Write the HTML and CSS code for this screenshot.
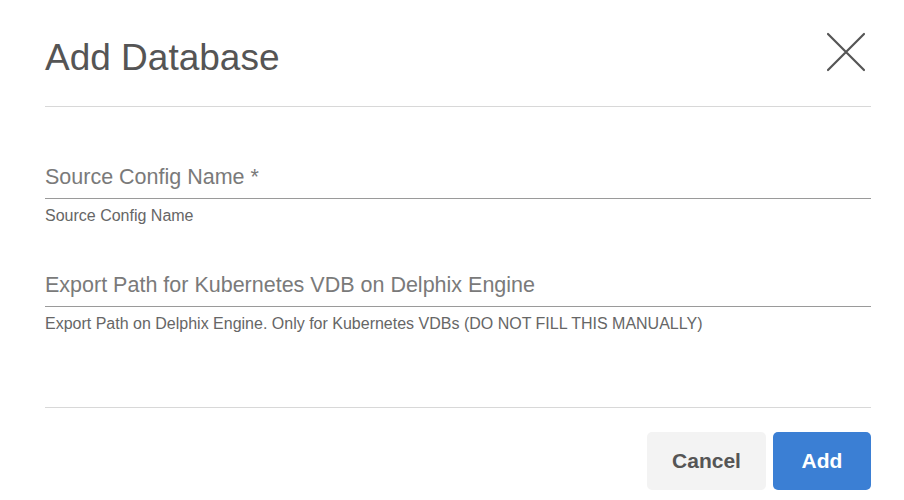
FILE: index.html
```html
<!DOCTYPE html>
<html lang="en">
<head>
<meta charset="utf-8">
<title>Add Database</title>
<link rel="stylesheet" href="styles.css">
</head>
<body>
<div class="dialog">
  <header class="dialog-header">
    <h1 class="dialog-title">Add Database</h1>
    <button class="close-btn" aria-label="Close">
      <svg width="40" height="40" viewBox="0 0 40 40">
        <path d="M2 2 L38 38 M38 2 L2 38" stroke="#555" stroke-width="2.2" stroke-linecap="round" fill="none"/>
      </svg>
    </button>
  </header>
  <section class="dialog-body">
    <div class="field">
      <div class="field-label">Source Config Name *</div>
      <div class="field-helper">Source Config Name</div>
    </div>
    <div class="field field-second">
      <div class="field-label">Export Path for Kubernetes VDB on Delphix Engine</div>
      <div class="field-helper">Export Path on Delphix Engine. Only for Kubernetes VDBs (DO NOT FILL THIS MANUALLY)</div>
    </div>
  </section>
  <footer class="dialog-footer">
    <button class="btn btn-cancel">Cancel</button>
    <button class="btn btn-primary">Add</button>
  </footer>
</div>
</body>
</html>
```

FILE: styles.css
```css
html, body {
  margin: 0;
  padding: 0;
  background: #ffffff;
}

body {
  font-family: "Liberation Sans", Arial, Helvetica, sans-serif;
  width: 904px;
  height: 500px;
  overflow: hidden;
}

.dialog {
  padding: 0 33px 0 45px;
}

.dialog-header {
  display: flex;
  justify-content: space-between;
  align-items: flex-start;
  padding-top: 32px;
  padding-bottom: 26px;
  border-bottom: 1px solid #d8d8d8;
}

.dialog-title {
  margin: 4px 0 0 0;
  font-size: 37px;
  line-height: 44px;
  font-weight: normal;
  color: #555555;
}

.close-btn {
  margin: 0 5px 0 0;
  padding: 0;
  border: none;
  background: transparent;
  width: 40px;
  height: 40px;
  display: block;
}

.close-btn svg {
  display: block;
}

.dialog-body {
  padding-top: 58px;
  padding-bottom: 73px;
  border-bottom: 1px solid #d8d8d8;
}

.field-second {
  margin-top: 47px;
}

.field-label {
  font-size: 21.5px;
  line-height: 24px;
  color: #7a7a7a;
  padding-bottom: 9px;
  border-bottom: 1px solid #9a9a9a;
}

.field-helper {
  margin-top: 7px;
  font-size: 16px;
  line-height: 20px;
  color: #666666;
}

.dialog-footer {
  display: flex;
  justify-content: flex-end;
  gap: 7px;
  padding-top: 24px;
}

.btn {
  height: 58px;
  border: none;
  border-radius: 5px;
  font-family: "Liberation Sans", Arial, Helvetica, sans-serif;
  font-size: 21px;
  font-weight: bold;
  padding: 0;
}

.btn-cancel {
  width: 119px;
  background: #f3f3f3;
  color: #555555;
}

.btn-primary {
  width: 98px;
  background: #3b7fd4;
  color: #ffffff;
}
```
